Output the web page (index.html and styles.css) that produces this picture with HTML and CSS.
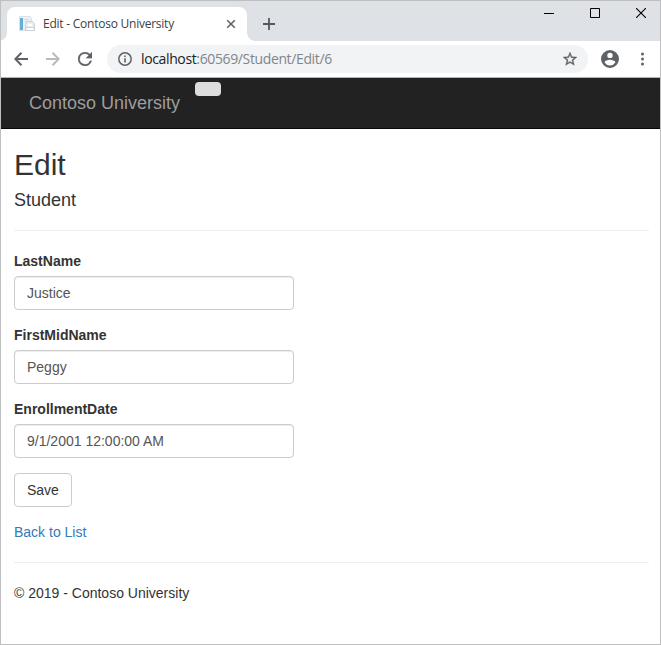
FILE: index.html
```html
<!DOCTYPE html>
<html lang="en">
<head>
<meta charset="utf-8">
<title>Edit - Contoso University</title>
<link rel="stylesheet" href="styles.css">
</head>
<body>
<div class="window">
  <header class="tabstrip">
    <div class="tab">
      <svg class="favicon" width="16" height="16" viewBox="0 0 16 16">
        <path d="M.5.5h11l1 2v12H.5z" fill="#edf1f5" stroke="#d9e0e6"/>
        <path d="M1 2h3v12H1z" fill="#68add8"/>
        <path d="M5.500 3.500h5M5.500 5.500h3" stroke="#d3dae1"/>
        <path d="M7.500 5.500h6l2 2.500v6.500h-9v-6z" fill="#e9edf1" stroke="#c9d0d8"/>
        <path d="M9 8h4v2H9zM8 12h6v2H8z" fill="#fff"/>
        <path d="M7 11.500h8" stroke="#cbd2da"/>
      </svg>
      <span class="tab-title">Edit - Contoso University</span>
      <svg class="tab-close" width="10" height="10" viewBox="0 0 10 10"><path d="M1.200 1.200l7.600 7.600M8.800 1.200l-7.600 7.600" stroke="#5f6368" stroke-width="1.600" fill="none"/></svg>
    </div>
    <svg class="new-tab" width="12" height="12" viewBox="0 0 12 12"><path d="M6 0v12M0 6h12" stroke="#55595e" stroke-width="1.800"/></svg>
    <div class="controls">
      <svg width="10" height="10" viewBox="0 0 10 10"><path d="M0 5.500h10" stroke="#000"/></svg>
      <svg width="10" height="10" viewBox="0 0 10 10"><path d="M.5.5h9v9h-9z" fill="none" stroke="#000"/></svg>
      <svg width="10" height="10" viewBox="0 0 10 10"><path d="M0 0l10 10M10 0L0 10" stroke="#000" stroke-width="1.100"/></svg>
    </div>
  </header>
  <div class="toolbar">
    <svg class="nav-icon" width="14" height="14" viewBox="0 0 14 14"><path d="M14 7H1.500M7.500.8L1.300 7l6.200 6.200" fill="none" stroke="#5f6368" stroke-width="2"/></svg>
    <svg class="nav-icon" width="14" height="14" viewBox="0 0 14 14"><path d="M0 7h12.500M6.500.8L12.700 7l-6.200 6.200" fill="none" stroke="#b8babd" stroke-width="2"/></svg>
    <svg class="nav-icon" width="14" height="14" viewBox="4 4 16 16"><path fill="#5f6368" stroke="#5f6368" stroke-width=".3" d="M17.650 6.350A7.960 7.960 0 0 0 12 4a8 8 0 1 0 7.730 10h-2.080A6 6 0 1 1 12 6c1.660 0 3.140.69 4.220 1.780L13 11h7V4z"/></svg>
    <div class="omnibox">
      <svg width="14" height="14" viewBox="0 0 14 14"><circle cx="7" cy="7" r="6.200" fill="none" stroke="#5f6368" stroke-width="1.500"/><path d="M7 6.200v4.300M7 3.400v1.600" stroke="#5f6368" stroke-width="1.600"/></svg>
      <span class="url"><span class="host">localhost</span>:60569/Student/Edit/6</span>
      <svg class="star" width="14" height="14" viewBox="2 2 20 20"><path fill="#5f6368" stroke="#5f6368" stroke-width=".5" d="M22 9.240l-7.190-.62L12 2 9.190 8.630 2 9.240l5.460 4.730L5.820 21 12 17.270 18.180 21l-1.630-7.030zM12 15.400l-3.760 2.270 1-4.280-3.320-2.880 4.380-.38L12 6.100l1.710 4.040 4.380.38-3.320 2.880 1 4.280z"/></svg>
    </div>
    <svg class="avatar" width="18" height="18" viewBox="2 2 20 20"><path fill="#5f6368" d="M12 2a10 10 0 1 0 0 20 10 10 0 0 0 0-20zm0 3a3 3 0 1 1 0 6 3 3 0 0 1 0-6zm0 14.200a7.200 7.200 0 0 1-6-3.220c.03-1.990 4-3.080 6-3.080s5.970 1.090 6 3.080a7.200 7.200 0 0 1-6 3.220z"/></svg>
    <svg class="more" width="4" height="14" viewBox="0 0 4 14"><g fill="#5f6368"><circle cx="1.500" cy="2" r="1.500"/><circle cx="1.500" cy="7" r="1.500"/><circle cx="1.500" cy="12" r="1.500"/></g></svg>
  </div>
  <nav class="navbar">
    <a class="brand">Contoso University</a>
    <span class="toggle"></span>
  </nav>
  <main class="content">
    <h2>Edit</h2>
    <h4>Student</h4>
    <hr>
    <form>
      <label for="last">LastName</label>
      <input id="last" type="text" value="Justice">
      <label for="first">FirstMidName</label>
      <input id="first" type="text" value="Peggy">
      <label for="date">EnrollmentDate</label>
      <input id="date" type="text" value="9/1/2001 12:00:00 AM">
      <button type="button">Save</button>
    </form>
    <a class="back">Back to List</a>
    <hr>
    <footer>© 2019 - Contoso University</footer>
  </main>
</div>
</body>
</html>
```
FILE: styles.css
```css
* { box-sizing: border-box; }
body {
  margin: 0;
  font: 14px/20px "Liberation Sans", Arial, sans-serif;
  color: #333;
  background: #fff;
}
svg { display: block; flex: none; }
.window { height: 645px; border: 1px solid #bfbfbf; overflow: hidden; }

.tabstrip { display: flex; height: 40px; background: #dee1e6; padding: 6px 14px 0 6px; }
.tab {
  position: relative;
  display: flex;
  align-items: center;
  width: 240px;
  height: 34px;
  padding: 0 11px 0 12px;
  background: #fff;
  border-radius: 8px 8px 0 0;
}
.tab::before, .tab::after {
  content: "";
  position: absolute;
  bottom: 0;
  width: 8px;
  height: 8px;
}
.tab::before { left: -8px; background: radial-gradient(circle at 0 0, transparent 7.5px, #fff 8px); }
.tab::after { right: -8px; background: radial-gradient(circle at 100% 0, transparent 7.5px, #fff 8px); }
.tab-title {
  flex: 1;
  margin-left: 8px;
  font: 12px/16px "Open Sans", "Noto Sans", sans-serif;
  letter-spacing: -0.24px;
  white-space: nowrap;
  color: #3c4043;
}
.new-tab { margin: 11px 0 0 16px; }
.controls { display: flex; gap: 36px; margin: 1px 0 0 auto; }

.toolbar {
  display: flex;
  align-items: center;
  height: 37px;
  padding: 0 15px 0 13px;
  background: #fff;
  border-bottom: 1px solid #b3b3b3;
}
.nav-icon { margin-right: 18px; }
.omnibox {
  display: flex;
  align-items: center;
  width: 481px;
  height: 28px;
  margin-left: -3px;
  padding: 0 11px;
  border-radius: 14px;
  background: #f1f3f4;
}
.url {
  flex: 1;
  margin-left: 9px;
  font: 14px/20px "Open Sans", "Noto Sans", sans-serif;
  letter-spacing: -0.37px;
  color: #80868b;
}
.host { color: #202124; }
.avatar { margin-left: 13px; }
.more { margin-left: auto; }

.navbar {
  display: flex;
  height: 51px;
  padding-left: 28px;
  background: #222;
  border-bottom: 1px solid #080808;
}
.brand { font-size: 18px; line-height: 20px; margin-top: 15px; color: #9d9d9d; }
.toggle { width: 26px; height: 14px; margin: 4px 0 0 15px; border-radius: 4px; background: #ddd; }

.content { padding: 19px 11px 0 13px; }
h2 { margin: 0 0 10px; font-size: 30px; line-height: 33px; font-weight: 400; }
h4 { margin: 0; font-size: 18px; line-height: 19px; font-weight: 400; }
hr { margin: 20px 0; border: 0; border-top: 1px solid #eee; }
form { display: flex; flex-direction: column; align-items: flex-start; }
label { margin-bottom: 5px; font-weight: 700; }
input {
  width: 280px;
  height: 34px;
  margin: 0 0 15px;
  padding: 6px 12px;
  border: 1px solid #ccc;
  border-radius: 4px;
  box-shadow: inset 0 1px 1px rgba(0, 0, 0, .075);
  font: inherit;
  color: #555;
  background: #fff;
}
button {
  height: 34px;
  padding: 6px 12px;
  margin: 0 0 15px;
  border: 1px solid #ccc;
  border-radius: 4px;
  background: #fff;
  font: inherit;
  color: #333;
}
.back { display: block; color: #337ab7; }
```
